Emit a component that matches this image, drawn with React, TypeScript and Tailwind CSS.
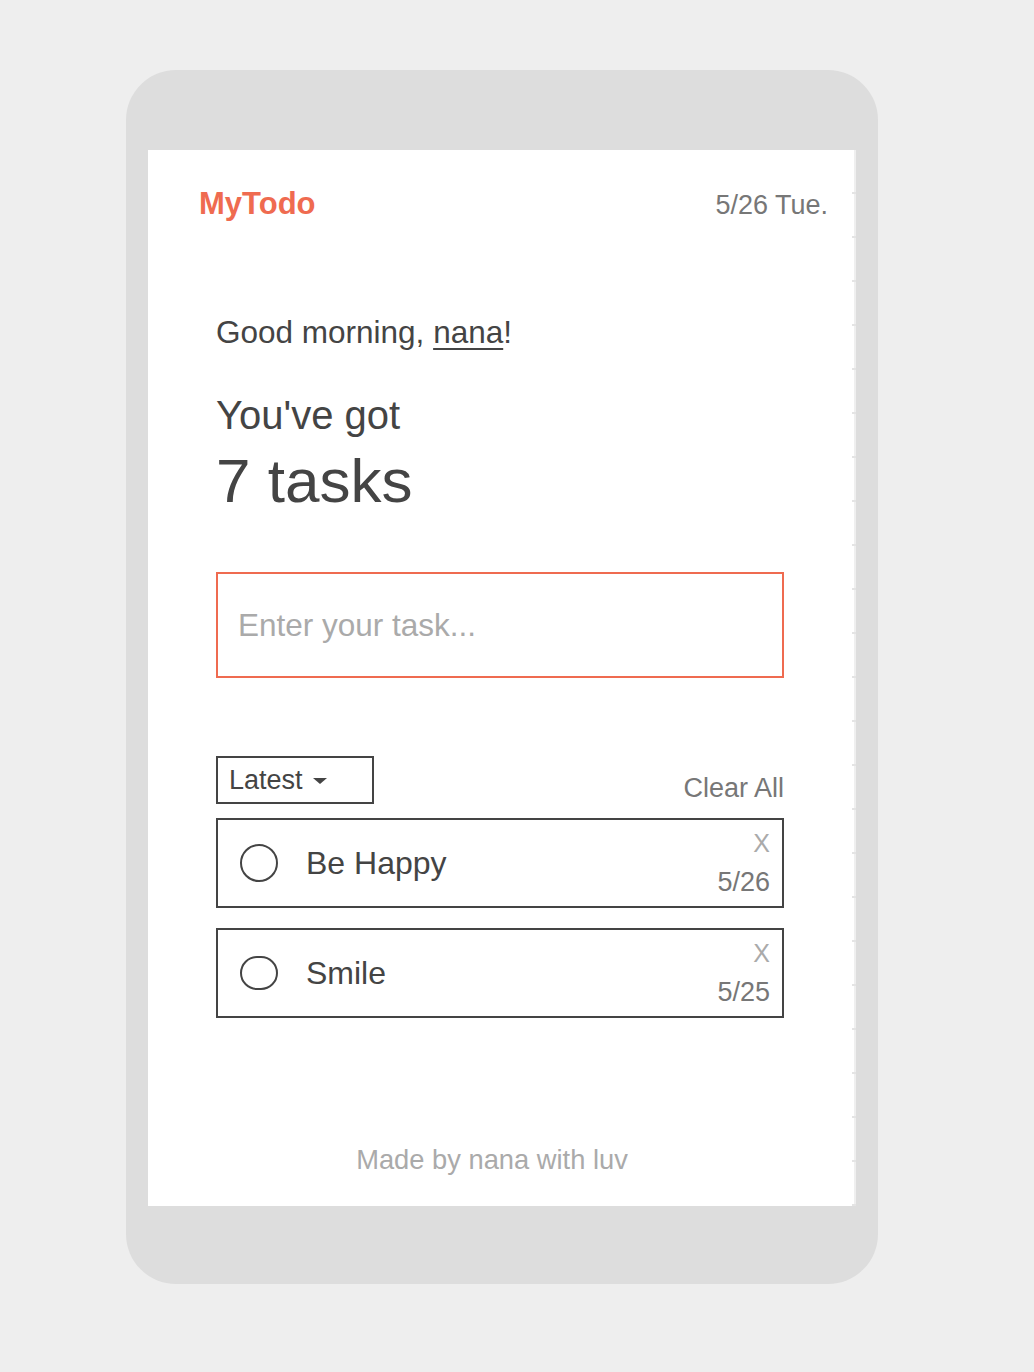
import React from "react";

const font = { fontFamily: '"Liberation Sans", Arial, sans-serif' };

function TaskItem({ title, date, circleH }: { title: string; date: string; circleH: string }) {
  return (
    <div className="flex h-[90px] items-center border-2 border-[#444444]">
      <div className={`ml-[22px] w-[38px] ${circleH} shrink-0 rounded-full border-2 border-[#444444]`} />
      <div className="ml-[28px] flex-1 text-[32px] leading-[32px] text-[#444444]">{title}</div>
      <div className="flex h-full flex-col items-end justify-between pb-[10px] pr-[12px] pt-[11px]">
        <span className="text-[25px] leading-[25px] text-[#aaaaaa]">X</span>
        <span className="text-[27px] leading-[27px] text-[#777777]">{date}</span>
      </div>
    </div>
  );
}

export default function App() {
  return (
    <div style={font} className="h-[1372px] w-[1034px] bg-[#eeeeee] pl-[126px] pt-[70px]">
      <div className="h-[1214px] w-[752px] rounded-[50px] bg-[#dddddd] px-[22px] pt-[80px]">
        <div className="flex h-[1056px] w-[708px] bg-white">
          <div className="flex flex-1 flex-col">
            <header className="flex items-baseline justify-between pl-[51px] pr-[24px] pt-[38px]">
              <span className="text-[31px] font-bold leading-[31px] text-[#ef6b50]">MyTodo</span>
              <span className="text-[27px] leading-[27px] text-[#777777]">5/26 Tue.</span>
            </header>
            <main className="flex flex-col pl-[68px] pr-[68px]">
              <p className="mt-[97px] text-[31.5px] leading-[32px] text-[#444444]">
                Good morning, <span className="underline decoration-2 underline-offset-[5px]">nana</span>!
              </p>
              <p className="mt-[47px] text-[40px] leading-[40px] text-[#444444]">You've got</p>
              <p className="mt-[15px] text-[62px] leading-[62px] text-[#444444]">7 tasks</p>
              <div className="mt-[60px] flex h-[106px] items-center border-2 border-[#ef6b50] pl-[20px]">
                <span className="text-[31.5px] leading-[32px] text-[#aaaaaa]">Enter your task...</span>
              </div>
              <div className="mt-[78px] flex items-end justify-between">
                <div className="flex h-[48px] w-[158px] items-center border-2 border-[#444444] pl-[11px]">
                  <span className="text-[27px] leading-[27px] text-[#444444]">Latest</span>
                  <svg width="14" height="6" viewBox="0 0 14 6" className="ml-[10px] mt-[2px]">
                    <polygon points="0,0 14,0 7,6" fill="#444444" />
                  </svg>
                </div>
                <span className="mb-[2px] text-[27px] leading-[27px] text-[#777777]">Clear All</span>
              </div>
              <div className="mt-[14px] flex flex-col gap-[20px]">
                <TaskItem title="Be Happy" date="5/26" circleH="h-[38px]" />
                <TaskItem title="Smile" date="5/25" circleH="h-[34px]" />
              </div>
            </main>
            <footer className="mt-auto pb-[33px] pr-[16px] text-center text-[27.3px] leading-[27px] text-[#aaaaaa]">
              Made by nana with luv
            </footer>
          </div>
          <div className="flex w-[4px]">
            <div className="w-[2px] bg-white bg-[repeating-linear-gradient(180deg,transparent_0px,transparent_42px,#e4e4e4_42px,#e4e4e4_44px)]" />
            <div className="w-[2px] bg-[#efefef] bg-[repeating-linear-gradient(180deg,transparent_0px,transparent_42px,#e4e4e4_42px,#e4e4e4_44px)]" />
          </div>
        </div>
      </div>
    </div>
  );
}
